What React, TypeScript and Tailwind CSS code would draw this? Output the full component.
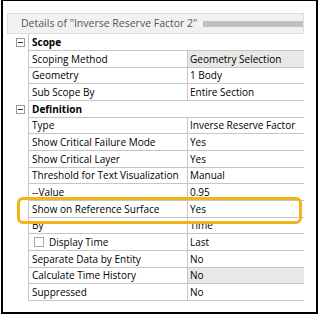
type Row = {
  label: string;
  value?: string;
  header?: boolean;
  shaded?: boolean;
  checkbox?: boolean;
};

const rows: Row[] = [
  { label: 'Scope', header: true },
  { label: 'Scoping Method', value: 'Geometry Selection', shaded: true },
  { label: 'Geometry', value: '1 Body' },
  { label: 'Sub Scope By', value: 'Entire Section' },
  { label: 'Definition', header: true },
  { label: 'Type', value: 'Inverse Reserve Factor' },
  { label: 'Show Critical Failure Mode', value: 'Yes' },
  { label: 'Show Critical Layer', value: 'Yes' },
  { label: 'Threshold for Text Visualization', value: 'Manual' },
  { label: '--Value', value: '0.95' },
  { label: 'Show on Reference Surface', value: 'Yes' },
  { label: 'By', value: 'Time' },
  { label: 'Display Time', value: 'Last', checkbox: true },
  { label: 'Separate Data by Entity', value: 'No' },
  { label: 'Calculate Time History', value: 'No', shaded: true },
  { label: 'Suppressed', value: 'No' },
];

const Collapse = () => (
  <div className="ml-[9px] w-[9px] h-[9px] border border-[#9a9a9a] bg-white flex items-center justify-center">
    <div className="w-[5px] h-px bg-[#333]" />
  </div>
);

const App = () => {
  return (
    <div className="w-[322px] h-[318px] bg-white pl-[1px] font-['Open_Sans',sans-serif] text-[10px] text-black">
      <div className="w-[317px] h-[314px] border-l-2 border-r-2 border-b-2 border-t border-black pt-[12px] pl-[4px]">
        <div className="w-[297px] h-[21px] bg-[#f1f1f1] border border-[#dedede] flex items-center pl-[13px] pr-0 text-[#555] text-[10.5px]">
          <span className="whitespace-nowrap">Details of "Inverse Reserve Factor 2"</span>
          <div className="flex-1 ml-[6px] h-[6px] bg-[radial-gradient(circle,#bdbdbd_0.7px,transparent_0.9px)] bg-[length:2px_2px]" />
        </div>

        <div className="relative w-[297px]">
          {rows.map((row, i) => (
            <div key={i} className={`flex ${i % 3 === 2 ? 'h-[16px]' : 'h-[17px]'}`}>
              <div className="w-[21px] shrink-0 flex items-center">{row.header && <Collapse />}</div>
              {row.header ? (
                <div className="flex-1 border-l border-b border-[#c6c6c6] flex items-center pl-[3px] font-bold">
                  {row.label}
                </div>
              ) : (
                <div className="flex-1 flex border-l border-b border-[#c6c6c6]">
                  <div className="w-[158px] shrink-0 flex items-center pl-[3px] overflow-hidden whitespace-nowrap">
                    {row.checkbox && <div className="w-[10px] h-[10px] border border-[#a8a8a8] bg-white mr-[5px] ml-[2px]" />}
                    {row.label}
                  </div>
                  <div
                    className={`flex-1 border-l border-[#c6c6c6] flex items-center pl-[2px] whitespace-nowrap ${
                      row.shaded ? 'bg-[#e8e8e6]' : ''
                    }`}
                  >
                    {row.value}
                  </div>
                </div>
              )}
            </div>
          ))}
          <div className="absolute left-[10px] top-[163px] w-[285px] h-[27px] border-[3px] border-[#f6b21b] rounded-[6px]" />
        </div>
      </div>
    </div>
  );
};

export default App;
